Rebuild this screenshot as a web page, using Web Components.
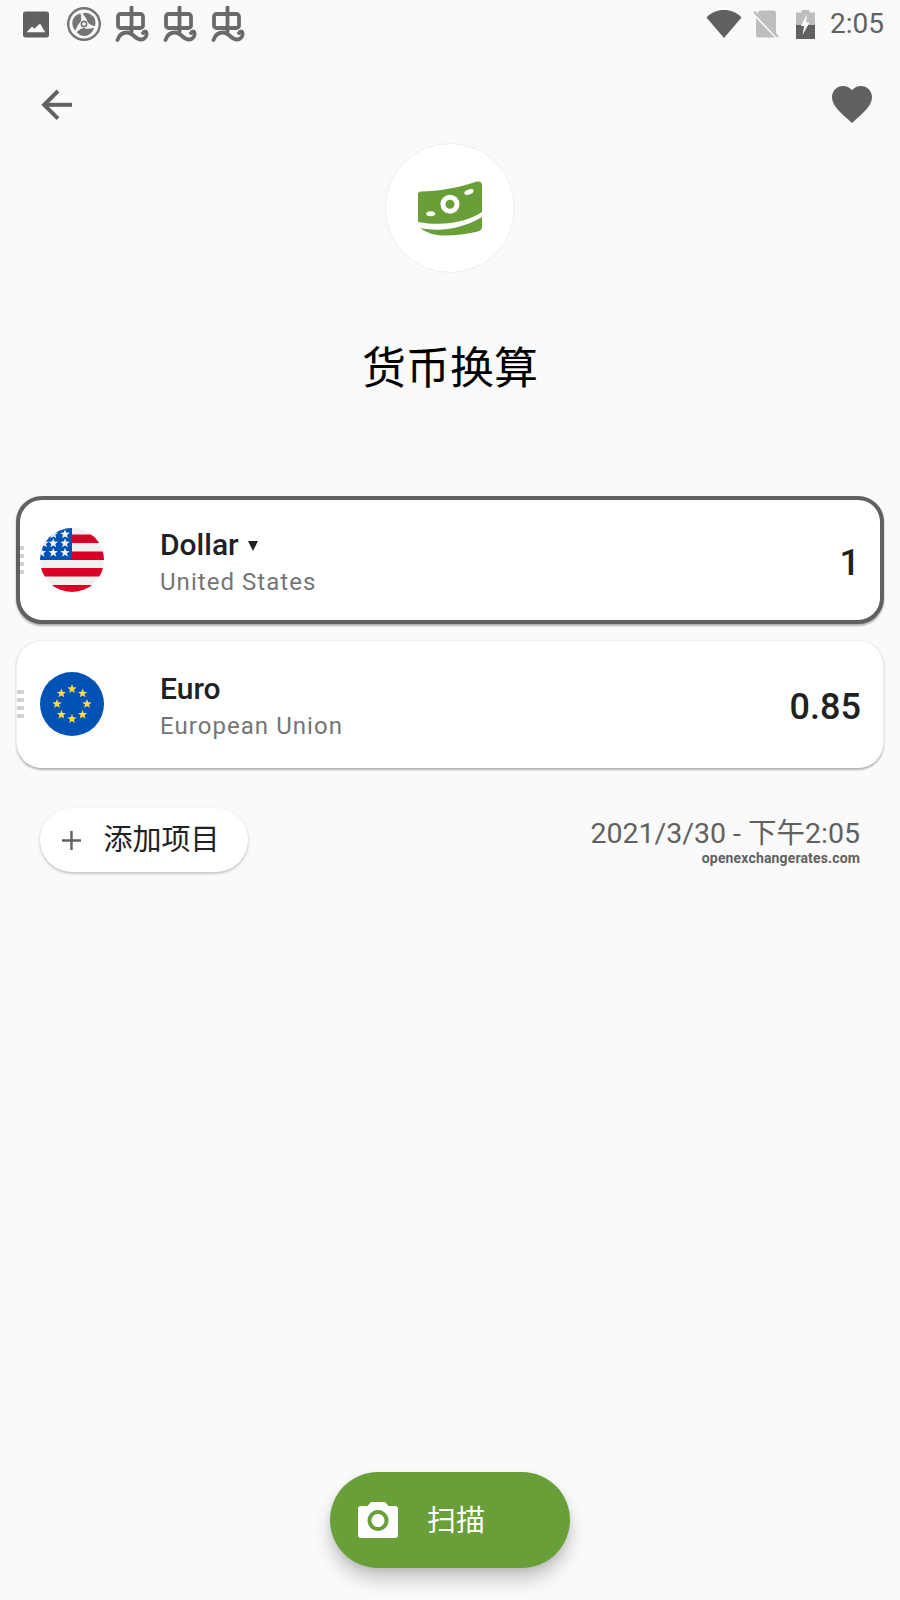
<!DOCTYPE html>
<html lang="zh">
<head>
<meta charset="utf-8">
<title>货币换算</title>
<style>
html,body{margin:0;padding:0;background:#fafafa}
body{font-family:Roboto,"Noto Sans CJK SC",sans-serif;color:#212121}
</style>
</head>
<body>
<app-screen>
  <status-bar slot="top"></status-bar>
  <app-toolbar slot="top"></app-toolbar>
  <tool-hero slot="top">货币换算</tool-hero>
  <currency-list slot="top">
    <currency-card active value="1">
      <us-flag slot="flag"></us-flag>
      <span slot="name">Dollar</span>
      <span slot="region">United States</span>
    </currency-card>
    <currency-card value="0.85">
      <eu-flag slot="flag"></eu-flag>
      <span slot="name">Euro</span>
      <span slot="region">European Union</span>
    </currency-card>
  </currency-list>
  <list-footer slot="top"></list-footer>
  <scan-fab slot="bottom">扫描</scan-fab>
</app-screen>
<script>
function star(cx,cy,r,fill){
  var p=[];
  for(var i=0;i<10;i++){
    var a=-Math.PI/2+i*Math.PI/5,q=i%2?r*0.42:r;
    p.push((cx+q*Math.cos(a)).toFixed(2)+','+(cy+q*Math.sin(a)).toFixed(2));
  }
  return '<polygon fill="'+fill+'" points="'+p.join(' ')+'"/>';
}
function def(name,html){
  customElements.define(name,class extends HTMLElement{
    constructor(){
      super();
      this.attachShadow({mode:'open'}).innerHTML=typeof html==='function'?html(this):html;
    }
  });
}
var bug='<svg width="34" height="36" viewBox="0 0 34 36" fill="none" stroke="#6a6a6a" stroke-width="3.800" stroke-linecap="round" stroke-linejoin="round"><path d="M16.500 1.500V26"/><path d="M5.500 8h20a2.500 2.500 0 0 1 2.500 2.500v9a2.500 2.500 0 0 1-2.500 2.500h-20a2.500 2.500 0 0 1-2.500-2.500v-9A2.500 2.500 0 0 1 5.500 8z"/><path d="M2.500 34C4 29 8 26.500 12 26.500c6 0 8 7 14 7 4 0 6-3.500 5.500-6.500-.5-2-2.500-2-3.500 0"/></svg>';
var blade='M13.500 6.500C8 7.500 4.500 12 5.500 18c.5 3 2 5 3 5.500 1.500-3.500 2.500-6.500 4.500-8 1.500-1.500 1.500-5.500.5-9z';

def('app-screen',`<style>
:host{display:flex;flex-direction:column;width:900px;height:1600px;overflow:hidden;background:#fafafa}
.bottom{margin-top:auto;display:flex;justify-content:center;padding-bottom:32px}
</style><slot name="top"></slot><div class="bottom"><slot name="bottom"></slot></div>`);

def('status-bar',`<style>
:host{display:flex;align-items:center;height:48px;color:#616161;font:400 28px Roboto,sans-serif}
.l{display:flex;align-items:center;margin-left:23px;height:48px}
.r{display:flex;align-items:center;margin-left:auto;margin-right:16px;height:48px}
svg{display:block;flex:none}
.img{margin-right:17px}
.fan{margin-right:14px}
.b{margin-right:14px}
.wifi{margin-right:11px}.sim{margin-right:17px}.bat{margin-right:15px}
.t{line-height:48px;width:54px;text-align:right}
</style>
<div class="l">
<svg class="img" width="27" height="27" viewBox="0 0 27 27"><rect width="26" height="26" y=".5" rx="2.500" fill="#616161"/><path d="M3.700 21.200 9 15.500l2.300 2.300L17 12.500l5.300 8.700z" fill="#fff"/></svg>
<svg class="fan" width="34" height="34" viewBox="0 0 34 34"><circle cx="17" cy="17" r="15.800" fill="none" stroke="#757575" stroke-width="2.400"/><g fill="#757575"><path d="${blade}"/><path d="${blade}" transform="rotate(120 17 17)"/><path d="${blade}" transform="rotate(240 17 17)"/></g><circle cx="17" cy="17" r="2.600" fill="none" stroke="#757575" stroke-width="1.600"/></svg>
<span class="b">${bug}</span><span class="b">${bug}</span><span class="b">${bug}</span>
</div>
<div class="r">
<svg class="wifi" width="36" height="30" viewBox="0 0 36 30"><path d="M0.500 8.500C5 3.500 11 1 18 1s13 2.500 17.500 7.500L18 29z" fill="#616161"/></svg>
<svg class="sim" width="26" height="28" viewBox="0 0 26 28"><path d="M5 2.500A2.500 2.500 0 0 1 7.500 .5h13a2.500 2.500 0 0 1 2.500 2.500v20.500L5 4z M3 8l19 19.500H5.500A2.500 2.500 0 0 1 3 25z" fill="#bdbdbd"/><path d="M1 1.500 25 27" stroke="#bdbdbd" stroke-width="2.400" fill="none"/></svg>
<svg class="bat" width="19" height="29" viewBox="0 0 19 29"><path d="M5.500 0h8v2.500H19V15H0V2.500h5.500z" fill="#bdbdbd"/><rect y="15" width="19" height="14" fill="#616161"/><path d="M10.800 4.500 5 16h3.200L6.500 25l7-12.500H10z" fill="#fff"/></svg>
<span class="t">2:05</span>
</div>`);

def('app-toolbar',`<style>
:host{display:flex;justify-content:space-between;align-items:center;height:86px;padding:27px 28px 0 41px;box-sizing:border-box}
svg{display:block}
</style>
<svg width="32" height="32" viewBox="0 0 32 32" fill="none" stroke="#616161" stroke-width="4"><path d="M31 15.800H4"/><path d="M17 2 3.200 15.800 17 29.600"/></svg>
<svg width="40" height="37" viewBox="0 0 40 37"><path d="M20 37 17 34.300C6.800 25 0 18.900 0 11.200 0 4.900 4.800 0 11 0c3.500 0 6.800 1.600 9 4.200C22.200 1.600 25.500 0 29 0c6.200 0 11 4.900 11 11.200 0 7.700-6.800 13.800-17 23.100z" fill="#616161"/></svg>`);

def('tool-hero',`<style>
:host{display:flex;flex-direction:column;align-items:center;margin-top:9px}
.c{width:130px;height:130px;box-sizing:border-box;border-radius:50%;background:#fff;border:1px solid #eee;display:flex;align-items:center;justify-content:center}
svg{display:block}
h1{margin:63px 0 0;height:66px;font:400 44px/66px Roboto,"Noto Sans CJK SC",sans-serif;color:#000}
</style>
<div class="c"><svg width="65" height="55" viewBox="0 0 65 55"><path fill="#689f38" d="M3 10.500C20 10.500 40 7 59 .6 62-.2 64 1.500 64 4.500V31C50 40 28 46 0 41V13C0 11.500 1.500 10.500 3 10.500z"/><path fill="#689f38" d="M2 47C22 51 44 48 64 36v10c0 2-1.500 4-4 4.500C48 53 38 54.500 26 54.500 17 54.500 9 52 2 47z"/><circle cx="32" cy="23.300" r="9.500" fill="#fff"/><circle cx="32" cy="23.300" r="4.500" fill="#689f38"/><ellipse cx="51" cy="11" rx="4.800" ry="2.500" transform="rotate(-20 51 11)" fill="#fff"/><ellipse cx="12.700" cy="32.700" rx="4.500" ry="2.500" fill="#fff"/></svg></div>
<h1><slot></slot></h1>`);

def('currency-list',`<style>:host{display:flex;flex-direction:column;gap:16px;margin:94px 16px 0}</style><slot></slot>`);

def('currency-card',function(h){return `<style>
:host{display:flex;align-items:center;height:128px;box-sizing:border-box;background:#fff;border-radius:26px;border:1px solid #f0f0f0;border-bottom-color:#fff;box-shadow:0 1.500px 2px rgba(0,0,0,.28);padding-right:22px;overflow:hidden}
:host([active]){border:4px solid #616161;padding-right:20px;box-shadow:0 1.500px 2px rgba(0,0,0,.3)}
.h{flex:none;width:7px;display:flex;flex-direction:column;gap:4px;margin-right:16px}
:host([active]) .h{width:4px}
.h i{display:block;height:4px;background:#d2d2d2}
.f{flex:none;width:64px;height:64px;margin-right:56px}
.m{flex:1;min-width:0;padding-top:7px}
.n{display:flex;align-items:center;font:500 30px/36px Roboto,sans-serif;color:#212121;height:36px;margin-top:-1px}
.tri{display:none;margin-left:9px;margin-top:2px}
:host([active]) .tri{display:block}
.s{font:400 24px/36px Roboto,sans-serif;color:#757575;letter-spacing:1.05px;height:36px;margin-top:1px}
.v{font:500 36px/44px Roboto,sans-serif;color:#212121;margin-top:6px}
</style>
<div class="h"><i></i><i></i><i></i><i></i></div>
<div class="f"><slot name="flag"></slot></div>
<div class="m"><div class="n"><slot name="name"></slot><svg class="tri" width="10" height="10" viewBox="0 0 10 10"><path d="M0 0h10L5 10z" fill="#212121"/></svg></div><div class="s"><slot name="region"></slot></div></div>
<div class="v">${h.getAttribute('value')||''}</div>`});

var st='';
[[1.5,6.3],[13.3,6.3],[25,6.3],[4,15.3],[13.3,15.3],[25,15.3],[1.5,24.7],[13.3,24.7],[25,24.7]].forEach(function(a){st+=star(a[0],a[1],5,'#f0f0f0')});
def('us-flag',`<style>:host{display:block;width:64px;height:64px}svg{display:block}</style>
<svg width="64" height="64" viewBox="0 0 64 64"><defs><clipPath id="c"><circle cx="32" cy="32" r="32"/></clipPath></defs>
<g clip-path="url(#c)"><rect width="64" height="64" fill="#f0f0f0"/><g fill="#d80027"><rect x="32" y="6.500" width="32" height="8.500"/><rect x="32" y="23.500" width="32" height="8.500"/><rect y="40" width="64" height="8.500"/><rect y="57" width="64" height="7"/></g><rect width="32" height="32" fill="#0052b4"/>${st}</g></svg>`);

var eu='';
for(var i=0;i<8;i++){var a=i*Math.PI/4;eu+=star(32+15*Math.sin(a),32-15*Math.cos(a),4.9,'#ffda44')}
def('eu-flag',`<style>:host{display:block;width:64px;height:64px}svg{display:block}</style>
<svg width="64" height="64" viewBox="0 0 64 64"><circle cx="32" cy="32" r="32" fill="#0052b4"/>${eu}</svg>`);

def('add-button',`<style>
:host{display:flex;align-items:center;width:208px;height:64px;border-radius:32px;background:#fff;box-shadow:0 1.500px 3px rgba(0,0,0,.25);box-sizing:border-box;padding-left:22px}
svg{display:block;margin-right:22.5px}
span{font:400 29px/40px "Noto Sans CJK SC",sans-serif;color:#212121;margin-top:-6px}
</style><svg width="19" height="19" viewBox="0 0 19 19" stroke="#616161" stroke-width="2.400"><path d="M9.500 0v19M0 9.500h19"/></svg><span><slot></slot></span>`);

def('list-footer',`<style>
:host{display:flex;justify-content:space-between;align-items:flex-start;margin:40px 40px 0}
.r{text-align:right;color:#616161;margin-top:9px}
.d{font:400 28.5px/33px Roboto,"Noto Sans CJK SC",sans-serif;height:33px}
.w{font:700 14px/16px Roboto,sans-serif;letter-spacing:.15px}
</style><add-button>添加项目</add-button><div class="r"><div class="d">2021/3/30 - 下午2:05</div><div class="w">openexchangerates.com</div></div>`);

def('scan-fab',`<style>
:host{display:flex;align-items:center;width:240px;height:96px;border-radius:48px;background:#689f38;box-shadow:0 12px 18px rgba(0,0,0,.2),0 3px 6px rgba(0,0,0,.08);box-sizing:border-box;padding-left:28px}
svg{display:block;margin-right:29px}
span{font:400 29px/40px "Noto Sans CJK SC",sans-serif;color:#fff;margin-top:-4px}
</style><svg width="40" height="36" viewBox="0 0 40 36"><path fill="#fff" fill-rule="evenodd" d="M13 0h14l3.500 4H37a3 3 0 0 1 3 3v26a3 3 0 0 1-3 3H3a3 3 0 0 1-3-3V7a3 3 0 0 1 3-3h6.500zM20 8a10.500 10.500 0 1 0 .01 0zM20 12a6.500 6.500 0 1 1-.01 0z"/></svg><span><slot></slot></span>`);
</script>
</body>
</html>
